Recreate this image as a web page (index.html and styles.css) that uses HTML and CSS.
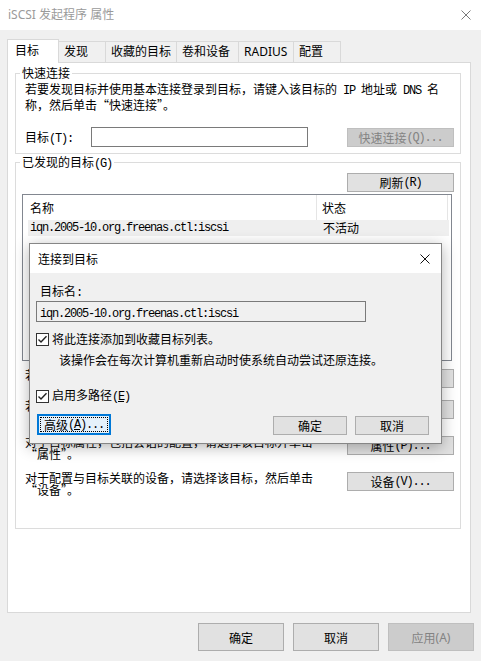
FILE: index.html
```html
<!DOCTYPE html>
<html lang="zh-CN">
<head>
<meta charset="utf-8">
<title>iSCSI 发起程序 属性</title>
<link rel="stylesheet" href="styles.css">
</head>
<body>
<div class="window">
  <header class="titlebar">
    <span class="title">iSCSI 发起程序 属性</span>
    <svg class="x-icon" width="10" height="10" viewBox="0 0 10 10"><path d="M0.5 0.5L9.5 9.5M9.5 0.5L0.5 9.5"/></svg>
  </header>

  <nav class="tabs">
    <div class="tab active">目标</div>
    <div class="tab w47">发现</div>
    <div class="tab w71">收藏的目标</div>
    <div class="tab w62">卷和设备</div>
    <div class="tab w55">RADIUS</div>
    <div class="tab w47">配置</div>
  </nav>

  <main class="panel">
    <section class="group quick">
      <div class="group-title">快速连接</div>
      <p class="desc">若要发现目标并使用基本连接登录到目标，请键入该目标的<span class="m"> IP </span>地址或<span class="m"> DNS </span>名<br>称，然后单击“快速连接”。</p>
      <div class="qrow">
        <span class="qlabel">目标<span class="m">(T):</span></span>
        <div class="input qinput"></div>
        <div class="btn disabled qbtn">快速连接<span class="m">(Q)...</span></div>
      </div>
    </section>

    <section class="group found">
      <div class="group-title">已发现的目标<span class="m">(G)</span></div>
      <div class="refresh-row"><div class="btn side">刷新<span class="m">(R)</span></div></div>
      <div class="list">
        <div class="list-head">
          <div class="hcol name">名称</div>
          <div class="hcol state">状态</div>
        </div>
        <div class="list-row">
          <div class="rcol name m">iqn.2005-10.org.freenas.ctl:iscsi</div>
          <div class="rcol state">不活动</div>
        </div>
      </div>
      <div class="actions">
        <div class="action">
          <p class="action-text one">若要使用高级选项进行连接，请选择目标并单击“连接”。</p>
          <div class="btn side">连接<span class="m">(N)</span></div>
        </div>
        <div class="action">
          <p class="action-text">若要完全断开某个目标的连接，请选择该目标，然后单击<br>“断开连接”。</p>
          <div class="btn side">断开连接<span class="m">(D)</span></div>
        </div>
        <div class="action">
          <p class="action-text">对于目标属性，包括会话的配置，请选择该目标并单击<br>“属性”。</p>
          <div class="btn side">属性<span class="m">(P)...</span></div>
        </div>
        <div class="action">
          <p class="action-text">对于配置与目标关联的设备，请选择该目标，然后单击<br>“设备”。</p>
          <div class="btn side">设备<span class="m">(V)...</span></div>
        </div>
      </div>
    </section>
  </main>

  <footer class="bottom">
    <div class="btn big">确定</div>
    <div class="btn big">取消</div>
    <div class="btn big disabled">应用<span class="latin">(A)</span></div>
  </footer>

  <div class="dialog">
    <div class="dlg-title">
      <span>连接到目标</span>
      <svg class="x-icon dark" width="10" height="10" viewBox="0 0 10 10"><path d="M0.5 0.5L9.5 9.5M9.5 0.5L0.5 9.5"/></svg>
    </div>
    <div class="dlg-body">
      <div class="dlg-label">目标名<span class="m">:</span></div>
      <div class="input dlg-input"><span class="m">iqn.2005-10.org.freenas.ctl:iscsi</span></div>
      <div class="check-row first">
        <svg class="cb" width="13" height="13" viewBox="0 0 13 13"><rect x="0.5" y="0.5" width="12" height="12"/><path d="M2.5 6.5L5 9L10.5 3.2"/></svg>
        <span>将此连接添加到收藏目标列表。</span>
      </div>
      <div class="note">该操作会在每次计算机重新启动时使系统自动尝试还原连接。</div>
      <div class="check-row second">
        <svg class="cb" width="13" height="13" viewBox="0 0 13 13"><rect x="0.5" y="0.5" width="12" height="12"/><path d="M2.5 6.5L5 9L10.5 3.2"/></svg>
        <span>启用多路径<span class="m">(<u>E</u>)</span></span>
      </div>
      <div class="dlg-buttons">
        <div class="btn dlg-btn focused"><span class="focus-ring">高级<span class="m">(<u>A</u>)...</span></span></div>
        <div class="btn dlg-btn ok">确定</div>
        <div class="btn dlg-btn cancel">取消</div>
      </div>
    </div>
  </div>
</div>
</body>
</html>
```

FILE: styles.css
```css
* { box-sizing: border-box; }
html, body { margin: 0; padding: 0; }
body {
  width: 481px;
  height: 661px;
  overflow: hidden;
  background: #f0f0f0;
  font-family: "Noto Sans CJK SC", sans-serif;
  font-size: 12px;
  color: #000;
}
.window { position: relative; width: 481px; height: 661px; }

.m {
  font-family: "Liberation Mono", "Noto Sans CJK SC", monospace;
  font-size: 12px;
  letter-spacing: -1.2px;
}
.latin { font-family: "Noto Sans", sans-serif; }

/* title bar */
.titlebar {
  height: 30px;
  background: #fff;
  display: flex;
  align-items: center;
  justify-content: space-between;
  padding: 0 10px 0 8px;
}
.title {
  font-family: "Noto Sans", "Noto Sans CJK SC", sans-serif;
  color: #9a9a9a;
  font-size: 12px;
  line-height: 16px;
}
.x-icon { display: block; fill: none; stroke: #7a7a7a; stroke-width: 1; }
.x-icon.dark { stroke: #111; }

/* tabs */
.tabs {
  position: relative;
  z-index: 1;
  display: flex;
  align-items: flex-end;
  height: 23px;
  margin: 9px 0 0 7px;
}
.tab {
  height: 21px;
  border-top: 1px solid #d9d9d9;
  border-right: 1px solid #d9d9d9;
  background: #f0f0f0;
  padding: 0 0 0 5px;
  line-height: 20px;
  white-space: nowrap;
  font-family: "Noto Sans", "Noto Sans CJK SC", sans-serif;
}
.tab.active {
  width: 52px;
  height: 24px;
  margin-bottom: -1px;
  border-left: 1px solid #d9d9d9;
  background: #fff;
  padding-left: 7px;
  line-height: 22px;
}
.w47 { width: 47px; }
.w55 { width: 55px; }
.w62 { width: 62px; }
.w71 { width: 71px; }

/* panel */
.panel {
  margin-left: 7px;
  width: 464px;
  height: 551px;
  border: 1px solid #d9d9d9;
  background: #fff;
  padding: 0 9px 0 7px;
}
.group {
  border: 1px solid #dcdcdc;
  padding-left: 6px;
  padding-right: 6px;
}
.group-title {
  display: table;
  height: 16px;
  margin: -9px 0 0 -2px;
  padding: 0 2px;
  background: #fff;
  line-height: 16px;
}
.quick { margin-top: 10px; padding-bottom: 6px; }
.desc { height: 26px; margin: 1px 0 0 3px; line-height: 13px; }
.qrow {
  display: flex;
  align-items: flex-end;
  height: 20px;
  margin-top: 19px;
  padding-left: 3px;
}
.qlabel { width: 66px; height: 20px; line-height: 20px; }
.input { border: 1px solid #7a7a7a; background: #fff; }
.qinput { width: 217px; height: 20px; }
.btn {
  display: flex;
  align-items: center;
  justify-content: center;
  border: 1px solid #adadad;
  background: #e1e1e1;
  white-space: nowrap;
  flex: none;
}
.btn.disabled { background: #cccccc; border-color: #bfbfbf; color: #838383; }
.qbtn { width: 107px; height: 19px; margin-left: auto; }

.found { margin-top: 8px; padding-bottom: 32px; }
.refresh-row { display: flex; justify-content: flex-end; margin-top: 1px; }
.side { width: 107px; height: 19px; }

.list {
  height: 167px;
  margin: 2px 2px 0 0;
  border: 1px solid #828790;
  background: #fff;
}
.list-head { display: flex; height: 25px; }
.hcol { line-height: 25px; }
.hcol.name { width: 294px; padding-left: 7px; border-right: 1px solid #e5e5e5; }
.hcol.state { width: 131px; padding-left: 5px; border-right: 1px solid #e5e5e5; }
.list-row {
  display: flex;
  height: 16px;
  margin: 0 2px 0 5px;
  background: #efefef;
  line-height: 16px;
}
.rcol.name { width: 289px; padding-left: 2px; }
.rcol.state { padding-left: 6px; }

.actions {
  display: flex;
  flex-direction: column;
  gap: 12px;
  margin-top: 8px;
  padding-left: 3px;
}
.action { display: flex; align-items: flex-start; justify-content: space-between; }
.action-text { margin: 0; height: 24px; line-height: 12px; width: 310px; }
.action-text.one { height: 19px; white-space: nowrap; }

/* bottom buttons */
.bottom {
  display: flex;
  justify-content: flex-end;
  gap: 9px;
  margin-top: 10px;
  padding-right: 7px;
}
.big { width: 86px; height: 28px; }

/* dialog */
.dialog {
  position: absolute;
  left: 29px;
  top: 243px;
  width: 413px;
  height: 201px;
  border: 1px solid #868686;
  background: #f0f0f0;
  box-shadow: 0 3px 14px rgba(0, 0, 0, 0.3);
}
.dlg-title {
  height: 29px;
  background: #fff;
  display: flex;
  align-items: center;
  justify-content: space-between;
  padding: 0 11px 0 8px;
  line-height: 16px;
}
.dlg-body { padding: 0 12px 0 6px; }
.dlg-label { height: 14px; margin-top: 11px; padding-left: 4px; line-height: 14px; }
.dlg-input {
  width: 330px;
  height: 21px;
  margin-top: 3px;
  background: #f0f0f0;
  padding-left: 3px;
  line-height: 19px;
}
.check-row { display: flex; align-items: center; gap: 3px; height: 14px; line-height: 14px; }
.check-row.first { margin-top: 10px; }
.check-row.second { margin-top: 22px; }
.cb { display: block; flex: none; }
.cb rect { fill: #fff; stroke: #333; stroke-width: 1; }
.cb path { fill: none; stroke: #222; stroke-width: 1.4; }
.note { height: 14px; margin-top: 7px; padding-left: 23px; line-height: 14px; }
.dlg-buttons { display: flex; align-items: flex-end; margin-top: 11px; }
.dlg-btn { width: 74px; height: 19px; }
.dlg-btn.focused {
  height: 21px;
  margin-left: 1px;
  border: 2px solid #0078d7;
  background: #e5f1fb;
  padding: 1px;
}
.focus-ring {
  display: flex;
  align-items: center;
  justify-content: center;
  width: 100%;
  height: 100%;
  border: 1px dotted #000;
}
.dlg-btn.ok { margin-left: auto; }
.dlg-btn.cancel { margin-left: 8px; }
```
